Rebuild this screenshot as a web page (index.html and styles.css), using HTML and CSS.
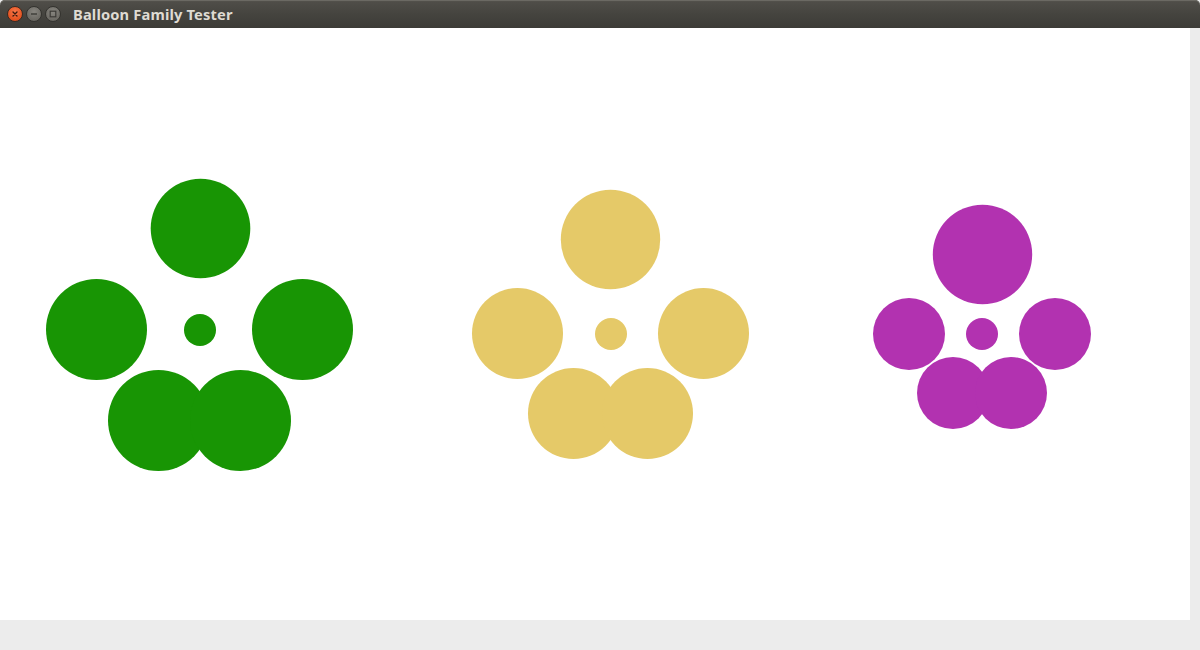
FILE: index.html
```html
<!DOCTYPE html>
<html>
<head>
<meta charset="utf-8">
<title>Balloon Family Tester</title>
<link rel="stylesheet" href="styles.css">
</head>
<body>
<div class="window">
  <header class="titlebar">
    <div class="controls">
      <span class="btn close">
        <svg width="10" height="10" viewBox="0 0 10 10"><path d="M3 3 L7 7 M7 3 L3 7" stroke="#3a1a0e" stroke-width="1.3" stroke-linecap="round"/></svg>
      </span>
      <span class="btn min">
        <svg width="10" height="10" viewBox="0 0 10 10"><path d="M2 5 H8" stroke="#3c3b37" stroke-width="1.4"/></svg>
      </span>
      <span class="btn max">
        <svg width="10" height="10" viewBox="0 0 10 10"><rect x="2.2" y="2.2" width="5.6" height="5.6" fill="none" stroke="#3c3b37" stroke-width="1.2"/></svg>
      </span>
    </div>
    <div class="title">Balloon Family Tester</div>
  </header>
  <div class="body">
    <main class="canvas">
      <svg class="scene" width="1190" height="592" viewBox="0 28 1190 592">
        <g fill="#189504">
          <circle cx="200.5" cy="228.5" r="49.8"/>
          <circle cx="96.5" cy="329.5" r="50.5"/>
          <circle cx="302.5" cy="329.5" r="50.5"/>
          <circle cx="200" cy="330" r="16"/>
          <circle cx="158.5" cy="420.5" r="50.5"/>
          <circle cx="240.5" cy="420.5" r="50.5"/>
        </g>
        <g fill="#e5c968">
          <circle cx="610.5" cy="239.5" r="49.7"/>
          <circle cx="517.5" cy="333.5" r="45.5"/>
          <circle cx="703.5" cy="333.5" r="45.5"/>
          <circle cx="611" cy="334" r="16"/>
          <circle cx="573.5" cy="413.5" r="45.5"/>
          <circle cx="647.5" cy="413.5" r="45.5"/>
        </g>
        <g fill="#b232b0">
          <circle cx="982.5" cy="254.5" r="49.7"/>
          <circle cx="909" cy="334" r="36"/>
          <circle cx="1055" cy="334" r="36"/>
          <circle cx="982" cy="334" r="16"/>
          <circle cx="953" cy="393" r="36"/>
          <circle cx="1011" cy="393" r="36"/>
        </g>
      </svg>
    </main>
    <aside class="right-gutter"></aside>
  </div>
  <footer class="bottom-gutter"></footer>
</div>
</body>
</html>
```
FILE: styles.css
```css
html, body {
  margin: 0;
  padding: 0;
  width: 1200px;
  height: 650px;
  overflow: hidden;
  background: #ececec;
}
.window {
  display: flex;
  flex-direction: column;
  width: 1200px;
  height: 650px;
}
.titlebar {
  height: 28px;
  flex: none;
  display: flex;
  align-items: center;
  background: linear-gradient(#5a5852 0px, #4f4d48 2px, #45443f 14px, #3c3b37 28px);
  box-shadow: inset 0 1px 0 #6b6963;
  border-radius: 5px 5px 0 0;
}
.controls {
  display: flex;
  gap: 3px;
  padding-left: 7px;
  align-items: center;
}
.btn {
  width: 16px;
  height: 16px;
  border-radius: 50%;
  display: flex;
  align-items: center;
  justify-content: center;
  box-sizing: border-box;
}
.btn.close {
  background: radial-gradient(circle at 50% 35%, #f7774a, #e4521f 70%, #c9431a);
  border: 1px solid #3a2a22;
}
.btn.min, .btn.max {
  background: radial-gradient(circle at 50% 35%, #87857f, #6c6a64 70%, #5e5c57);
  border: 1px solid #34332f;
}
.title {
  margin-left: 12px;
  font-family: "Noto Sans", "DejaVu Sans", sans-serif;
  font-weight: bold;
  font-size: 14.7px;
  color: #dfdbd2;
  letter-spacing: 0.15px;
  line-height: 28px;
}
.body {
  display: flex;
  height: 592px;
  flex: none;
}
.canvas {
  width: 1190px;
  height: 592px;
  background: #ffffff;
  flex: none;
}
.scene {
  display: block;
}
.right-gutter {
  flex: 1;
  background: #ececec;
}
.bottom-gutter {
  flex: 1;
  background: #ececec;
}
```
